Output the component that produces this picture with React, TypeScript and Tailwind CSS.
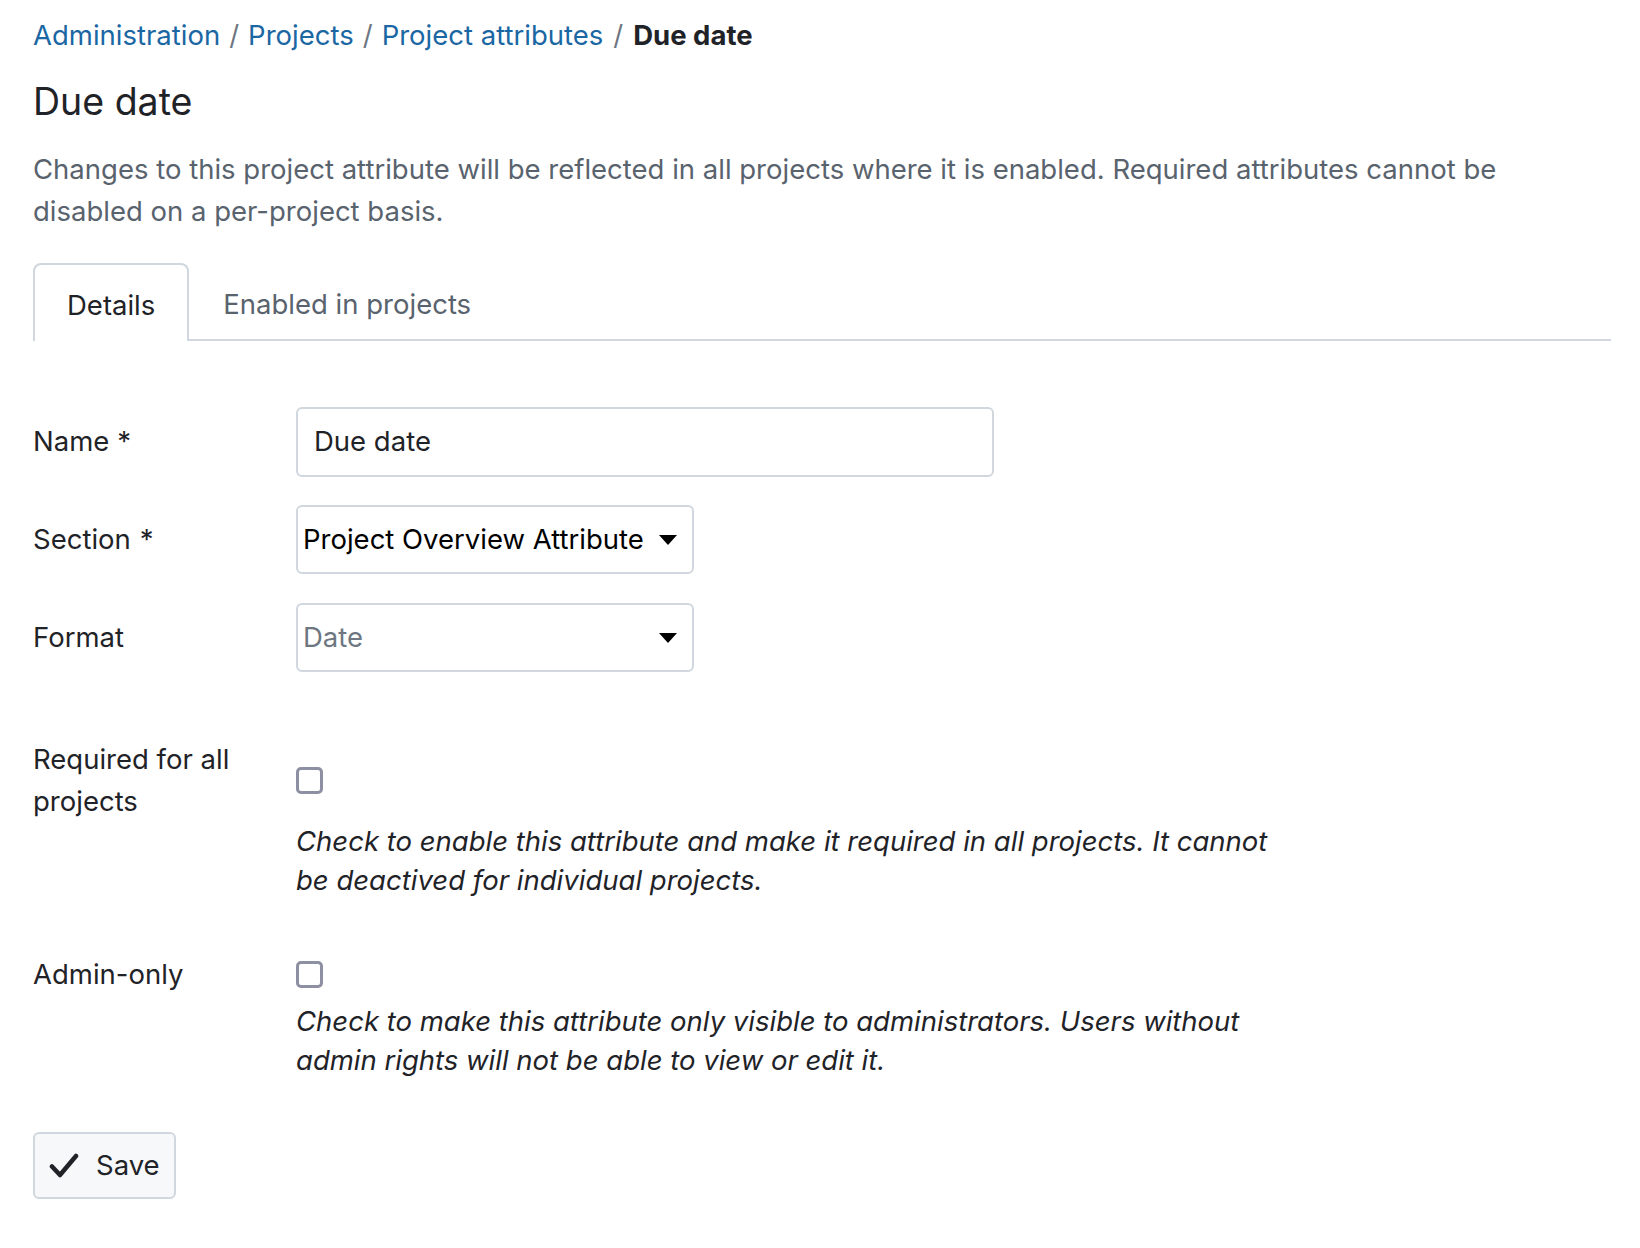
import React from "react";

const font = { fontFamily: "Inter, 'Noto Sans', sans-serif" };

function Caret() {
  return (
    <svg width="18" height="10" viewBox="0 0 18 10" className="shrink-0">
      <path d="M0 0 L18 0 L9 10 Z" fill="#000" />
    </svg>
  );
}

function Check() {
  return (
    <svg width="30" height="27" viewBox="0 0 30 27" className="shrink-0">
      <polyline
        points="3,14.5 11,23 27,4"
        fill="none"
        stroke="#1f2328"
        strokeWidth="4.5"
        strokeLinecap="round"
        strokeLinejoin="round"
      />
    </svg>
  );
}

function Checkbox() {
  return <div className="w-[27px] h-[27px] rounded-[5px] border-[3px] border-[#8d8fa2] bg-white" />;
}

export default function App() {
  return (
    <div className="min-h-screen bg-white pl-[33px] pr-[29px] text-[#1f2328]" style={font}>
      {/* Breadcrumb */}
      <nav className="pt-[15px] h-[55px] text-[27.5px] leading-[40px] flex items-center">
        <a className="text-[#1a67a3]">Administration</a>
        <span className="text-[#6e7781] mx-[9px]">/</span>
        <a className="text-[#1a67a3]">Projects</a>
        <span className="text-[#6e7781] mx-[9px]">/</span>
        <a className="text-[#1a67a3]">Project attributes</a>
        <span className="text-[#6e7781] mx-[10px]">/</span>
        <span className="font-bold text-[#1f2328]">Due date</span>
      </nav>

      <h1 className="mt-[23px] text-[37.5px] leading-[48px] font-normal text-[#1f2328]">Due date</h1>

      <p className="mt-[22px] text-[27.5px] leading-[42px] text-[#59636e] max-w-[1500px]">
        Changes to this project attribute will be reflected in all projects where it is enabled. Required attributes cannot be disabled on a per-project basis.
      </p>

      {/* Tabs */}
      <div className="mt-[31px] flex border-b-2 border-[#d0d7de]">
        <div className="h-[78px] -mb-[2px] flex items-center pt-[6px] px-[32px] border-x-2 border-t-2 border-[#d0d7de] rounded-t-[8px] bg-white text-[27.5px] text-[#1f2328]">
          Details
        </div>
        <div className="h-[78px] -mb-[2px] flex items-center pt-[6px] px-[34px] text-[27.5px] text-[#59636e]">
          Enabled in projects
        </div>
      </div>

      {/* Form */}
      <div className="mt-[66px] text-[27.5px]">
        <div className="flex items-center">
          <div className="w-[263px] shrink-0">Name<span className="ml-[8px]">*</span></div>
          <div className="w-[698px] h-[70px] border-2 border-[#d0d7de] rounded-[6px] flex items-center pl-[16px]">
            Due date
          </div>
        </div>

        <div className="flex items-center mt-[28px]">
          <div className="w-[263px] shrink-0">Section<span className="ml-[9px]">*</span></div>
          <div className="w-[398px] h-[69px] border-2 border-[#d0d7de] rounded-[6px] flex items-center justify-between pl-[5px] pr-[15px] text-black">
            <span>Project Overview Attribute</span>
            <Caret />
          </div>
        </div>

        <div className="flex items-center mt-[29px]">
          <div className="w-[263px] shrink-0">Format</div>
          <div className="w-[398px] h-[69px] border-2 border-[#d0d7de] rounded-[6px] flex items-center justify-between pl-[5px] pr-[15px] text-[#6e7781]">
            <span>Date</span>
            <Caret />
          </div>
        </div>

        {/* Required */}
        <div className="mt-[66px]">
          <div className="flex items-center">
            <div className="w-[263px] shrink-0 leading-[42px]">
              Required for all
              <br />
              projects
            </div>
            <Checkbox />
          </div>
          <p className="ml-[263px] w-[990px] italic leading-[39px] text-[#1f2328]">
            Check to enable this attribute and make it required in all projects. It cannot be deactived for individual projects.
          </p>
        </div>

        {/* Admin only */}
        <div className="mt-[53px]">
          <div className="flex items-center">
            <div className="w-[263px] shrink-0 leading-[42px]">Admin-only</div>
            <Checkbox />
          </div>
          <p className="mt-[7px] ml-[263px] w-[990px] italic leading-[39px] text-[#1f2328]">
            Check to make this attribute only visible to administrators. Users without admin rights will not be able to view or edit it.
          </p>
        </div>

        <button className="mt-[52px] h-[67px] w-[143px] flex items-center gap-[17px] pl-[14px] bg-[#f6f8fa] border-2 border-[#d0d7de] rounded-[6px] text-[27.5px] text-[#1f2328]">
          <Check />
          <span>Save</span>
        </button>
      </div>
    </div>
  );
}
